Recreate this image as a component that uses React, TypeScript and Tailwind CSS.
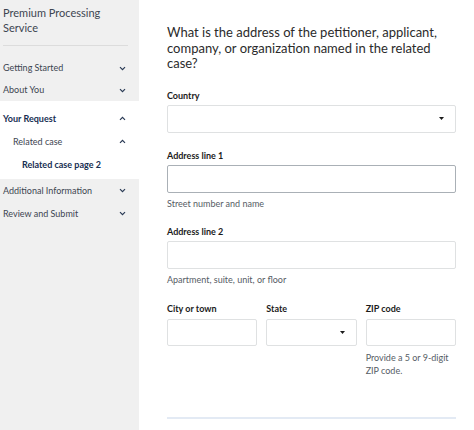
import React from "react";

const Chevron = ({ up }: { up?: boolean }) => (
  <svg width="7" height="5" viewBox="0 0 7 5" className="shrink-0">
    {up ? (
      <polyline points="1,3.8 3.5,1.3 6,3.8" fill="none" stroke="#2a3a55" strokeWidth="1.2" />
    ) : (
      <polyline points="1,1.2 3.5,3.7 6,1.2" fill="none" stroke="#2a3a55" strokeWidth="1.2" />
    )}
  </svg>
);

const Caret = () => (
  <svg width="5" height="3" viewBox="0 0 5 3" className="shrink-0">
    <polygon points="0,0 5,0 2.5,3" fill="#1b1b1b" />
  </svg>
);

type RowProps = {
  label: string;
  pad: string;
  bold?: boolean;
  chevron?: "up" | "down";
  height?: string;
};

const NavRow = ({ label, pad, bold, chevron, height = "h-[22px]" }: RowProps) => (
  <div className={`flex ${height} items-center justify-between pr-[13px] ${pad}`}>
    <span
      className={
        bold
          ? "text-[9px] font-bold text-[#162e51]"
          : "text-[9px] text-[#3d4551]"
      }
    >
      {label}
    </span>
    {chevron && <Chevron up={chevron === "up"} />}
  </div>
);

const Label = ({ children }: { children: React.ReactNode }) => (
  <p className="h-[12px] text-[9px] font-bold leading-[12px] text-[#1b1b1b]">{children}</p>
);

const Hint = ({ children }: { children: React.ReactNode }) => (
  <p className="mt-[5px] text-[9px] leading-[12px] text-[#565c65]">{children}</p>
);

const App = () => {
  return (
    <div className="flex h-[430px] w-[474px] overflow-hidden bg-white font-['Lato',sans-serif]">
      {/* left step navigation */}
      <aside className="flex w-[139px] shrink-0 flex-col">
        <div className="bg-[#f0f0f0]">
          <div className="px-[3px] pt-[5px] text-[11px] leading-[15px] text-[#3d4551]">
            <p>Premium Processing</p>
            <p>Service</p>
          </div>
          <div className="mx-[3px] mt-[10px] w-[125px] border-t border-[#dcdcdc]" />
          <div className="pt-[11px]">
            <NavRow label="Getting Started" pad="pl-[3px]" chevron="down" />
            <NavRow label="About You" pad="pl-[3px]" chevron="down" />
          </div>
        </div>
        <div className="bg-white pt-[6px] pb-[3px]">
          <NavRow label="Your Request" pad="pl-[3px]" bold chevron="up" height="h-[23px]" />
          <NavRow label="Related case" pad="pl-[13px]" chevron="up" height="h-[23px]" />
          <NavRow label="Related case page 2" pad="pl-[22px]" bold height="h-[23px]" />
        </div>
        <div className="flex-1 bg-[#f0f0f0]">
          <NavRow label="Additional Information" pad="pl-[3px]" chevron="down" height="h-[23px]" />
          <NavRow label="Review and Submit" pad="pl-[3px]" chevron="down" height="h-[23px]" />
        </div>
      </aside>

      {/* form */}
      <main className="ml-[28px] w-[289px] pt-[25px]">
        <h1 className="text-[13px] leading-[15.5px] text-[#2b2b2b]">
          What is the address of the petitioner, applicant, company, or organization named in the related case?
        </h1>

        <div className="mt-[18px]">
          <Label>Country</Label>
          <div className="mt-[3px] flex h-[28px] items-center justify-end rounded-[2px] border border-[#dfe1e2] pr-[11px]">
            <Caret />
          </div>
        </div>

        <div className="mt-[17px]">
          <Label>Address line 1</Label>
          <input className="mt-[3px] block h-[28px] w-full rounded-[2px] border border-[#aab0b6] outline-none" />
          <Hint>Street number and name</Hint>
        </div>

        <div className="mt-[16px]">
          <Label>Address line 2</Label>
          <input className="mt-[3px] block h-[28px] w-full rounded-[2px] border border-[#dfe1e2] outline-none" />
          <Hint>Apartment, suite, unit, or floor</Hint>
        </div>

        <div className="mt-[17px] grid grid-cols-3 gap-x-[9px]">
          <div>
            <Label>City or town</Label>
            <input className="mt-[4px] block h-[27px] w-full rounded-[2px] border border-[#dfe1e2] outline-none" />
          </div>
          <div>
            <Label>State</Label>
            <div className="mt-[4px] flex h-[27px] items-center justify-end rounded-[2px] border border-[#dfe1e2] pr-[11px]">
              <Caret />
            </div>
          </div>
          <div>
            <Label>ZIP code</Label>
            <input className="mt-[4px] block h-[27px] w-full rounded-[2px] border border-[#dfe1e2] outline-none" />
            <p className="mt-[5px] text-[9px] leading-[13.4px] text-[#565c65]">
              Provide a 5 or 9-digit ZIP code.
            </p>
          </div>
        </div>

        <div className="mt-[40px] h-[2px] bg-[#e3eaf4]" />
      </main>
    </div>
  );
};

export default App;
